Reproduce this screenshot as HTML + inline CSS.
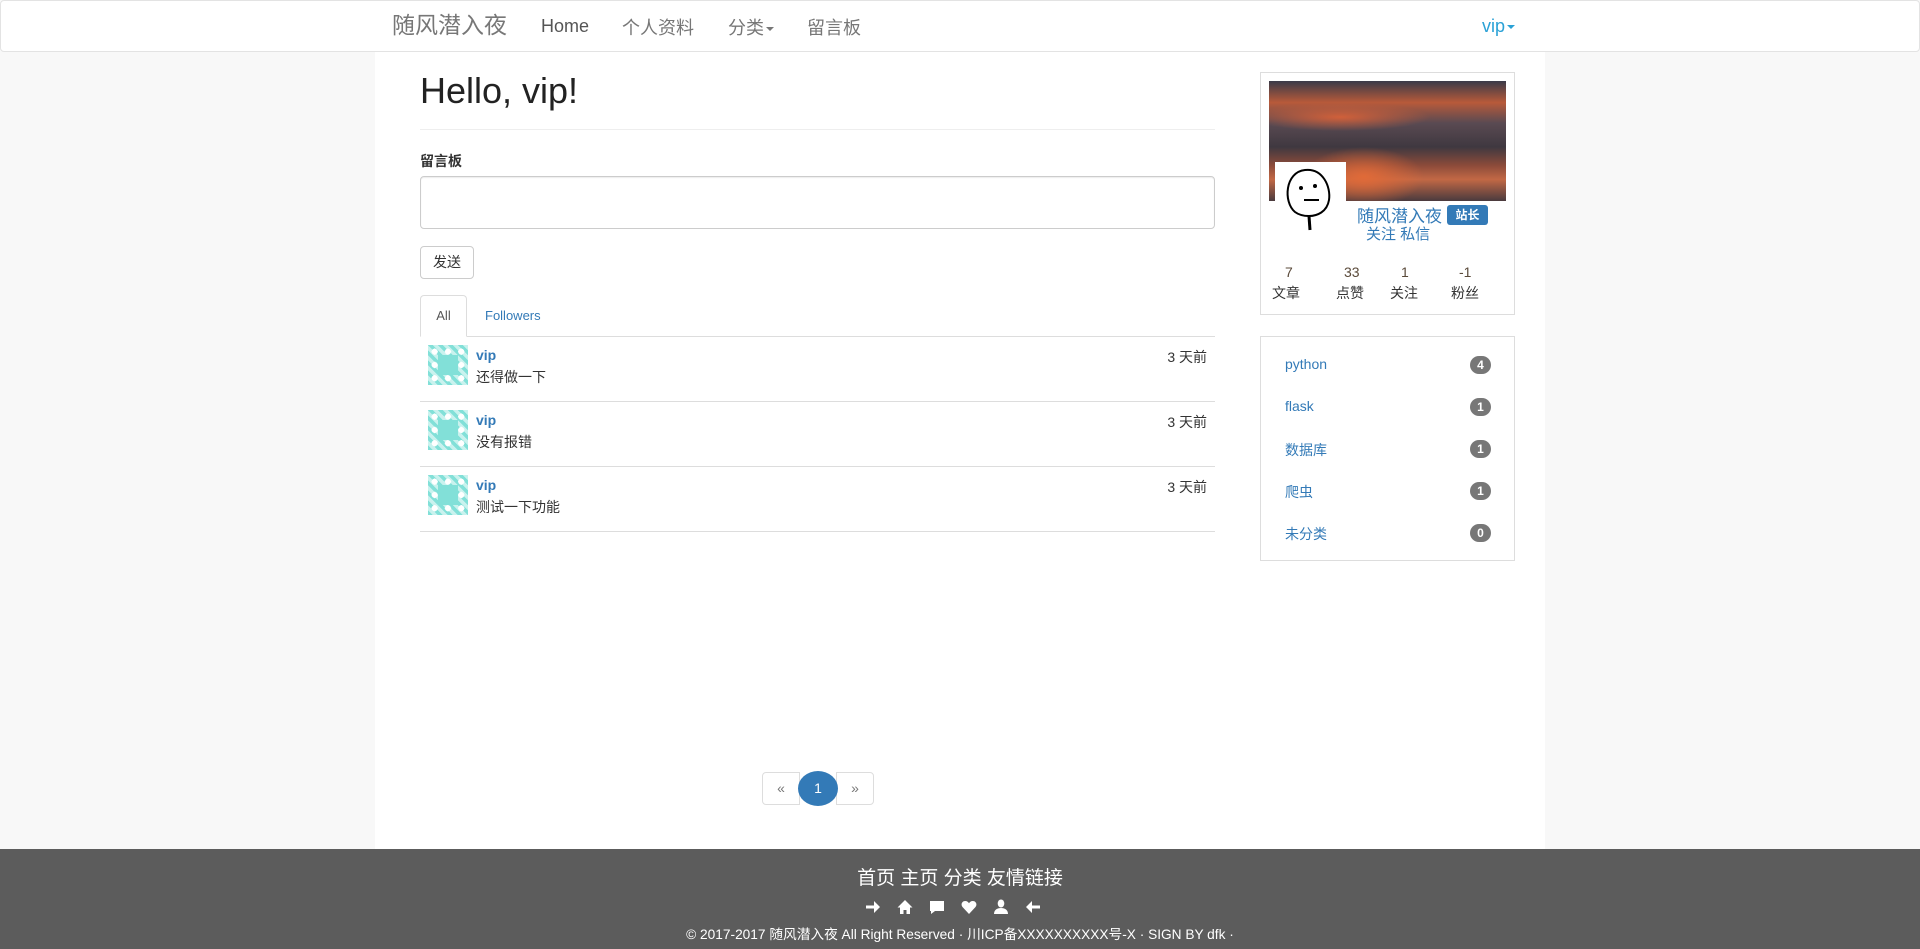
<!DOCTYPE html>
<html><head><meta charset="utf-8"><style>
*{box-sizing:border-box;margin:0;padding:0}
body{width:1920px;height:949px;overflow:hidden;background:#f8f8f8;font-family:"Liberation Sans","Noto Sans CJK SC",sans-serif;font-size:14px;color:#333;position:relative}
.a{position:absolute}
a{color:#337ab7;text-decoration:none}
.nav{left:0;top:0;width:1920px;height:52px;background:#fff;border:1px solid #e3e3e3;border-radius:4px}
.nav span{position:absolute;top:13px;font-size:18px;color:#777}
.main{left:375px;top:52px;width:1170px;height:797px;background:#fff}
.caret{display:inline-block;width:0;height:0;border-top:4px solid;border-left:4px solid transparent;border-right:4px solid transparent;vertical-align:middle;margin-left:2px}
.row{left:420px;width:795px;height:65px;border-bottom:1px solid #ddd}
.av{left:8px;top:8px;width:40px;height:40px;background:
radial-gradient(circle at 50% 50%,#fff 0 3px,transparent 3px) 0 0/13.3px 13.3px,
linear-gradient(45deg,#82e0d8 25%,#c9f2ee 25% 50%,#82e0d8 50% 75%,#c9f2ee 75%) 0 0/10px 10px}
.av:after{content:"";position:absolute;left:10px;top:10px;width:20px;height:20px;background:#82e0d8;box-shadow:inset 0 0 0 3px #82e0d8}
.nm{left:56px;top:10px;font-weight:bold;color:#337ab7}
.tx{left:56px;top:30px}
.tm{right:8px;top:10px}
.card{border:1px solid #ddd;background:#fff}
.cat{left:24px;color:#337ab7;font-size:14px}
.bd{right:23px;width:21px;height:18px;border-radius:9px;background:#777;color:#fff;font-size:12px;font-weight:bold;text-align:center;line-height:18px}
.ft{left:0;top:849px;width:1920px;height:100px;background:#5c5c5c;color:#fff;text-align:center}
.ic{position:absolute;top:50px}
</style></head><body>
<div class="a nav">
<span style="left:391px;top:10px;font-size:23px;color:#777;line-height:28px">随风潜入夜</span>
<span style="left:540px;top:15px;color:#555">Home</span>
<span style="left:621px">个人资料</span>
<span style="left:727px">分类<i class="caret"></i></span>
<span style="left:806px">留言板</span>
<span style="left:1481px;top:15px;color:#2aa1d6">vip<i class="caret"></i></span>
</div>
<div class="a main"></div>
<div class="a" style="left:420px;top:70px;font-size:36px;color:#222">Hello, vip!</div>
<div class="a" style="left:420px;top:129px;width:795px;border-top:1px solid #eee"></div>
<div class="a" style="left:420px;top:151px;font-weight:bold;font-size:14px">留言板</div>
<div class="a" style="left:420px;top:176px;width:795px;height:53px;border:1px solid #ccc;border-radius:4px;box-shadow:inset 0 1px 1px rgba(0,0,0,.075)"></div>
<div class="a" style="left:420px;top:246px;width:54px;height:33px;border:1px solid #ccc;border-radius:4px;text-align:center;line-height:31px;font-size:14px">发送</div>
<div class="a" style="left:420px;top:336px;width:795px;border-top:1px solid #ddd"></div>
<div class="a" style="left:420px;top:295px;width:47px;height:42px;border:1px solid #ddd;border-bottom:1px solid #fff;border-radius:4px 4px 0 0;background:#fff;text-align:center;line-height:40px;color:#555;font-size:13px">All</div>
<div class="a" style="left:485px;top:308px;color:#337ab7;font-size:13px">Followers</div>
<div class="a row" style="top:337px"><div class="a av"></div><div class="a nm">vip</div><div class="a tx">还得做一下</div><div class="a tm">3 天前</div></div>
<div class="a row" style="top:402px"><div class="a av"></div><div class="a nm">vip</div><div class="a tx">没有报错</div><div class="a tm">3 天前</div></div>
<div class="a row" style="top:467px"><div class="a av"></div><div class="a nm">vip</div><div class="a tx">测试一下功能</div><div class="a tm">3 天前</div></div>

<div class="a" style="left:762px;top:772px;width:38px;height:33px;border:1px solid #ddd;border-radius:4px 0 0 4px;text-align:center;line-height:31px;color:#777">«</div>
<div class="a" style="left:836px;top:772px;width:38px;height:33px;border:1px solid #ddd;border-radius:0 4px 4px 0;text-align:center;line-height:31px;color:#777">»</div>
<div class="a" style="left:798px;top:771px;width:40px;height:35px;border-radius:50%;background:#337ab7;color:#fff;text-align:center;line-height:35px">1</div>

<div class="a card" style="left:1260px;top:72px;width:255px;height:243px">
<div class="a" style="left:8px;top:8px;width:237px;height:120px;background:
radial-gradient(ellipse 60px 30px at 40% 80%,#e06a38 0,transparent 100%),
radial-gradient(ellipse 90px 14px at 30% 30%,#d0603a 0,transparent 100%),
linear-gradient(180deg,#3a3a48 0%,#b85a3a 18%,#5a4a52 35%,#3f3840 55%,#8a4a3a 70%,#c26845 82%,#4a3a3e 100%)"></div>
<div class="a" style="left:14px;top:89px;width:71px;height:70px;background:#fff"><svg width="71" height="70"><path d="M20 50 C8 40 10 10 30 8 C48 6 56 25 54 38 C52 50 42 54 34 54 C28 54 24 53 20 50" fill="none" stroke="#000" stroke-width="2"/><path d="M34 54 L35 68" stroke="#000" stroke-width="3"/><circle cx="26" cy="26" r="2"/><circle cx="40" cy="24" r="2"/><path d="M29 38 L44 38" stroke="#000" stroke-width="2"/></svg></div>
<div class="a" style="left:96px;top:129px;color:#337ab7;font-size:17px">随风潜入夜</div>
<div class="a" style="left:186px;top:132px;width:41px;height:20px;background:#337ab7;color:#fff;border-radius:3px;font-size:12px;font-weight:bold;text-align:center;line-height:20px">站长</div>
<div class="a" style="left:105px;top:150px;color:#337ab7;font-size:15px">关注 私信</div>
<div class="a" style="left:24px;top:191px;color:#5a4a3a">7</div>
<div class="a" style="left:11px;top:210px">文章</div>
<div class="a" style="left:83px;top:191px;color:#5a4a3a">33</div>
<div class="a" style="left:75px;top:210px">点赞</div>
<div class="a" style="left:140px;top:191px;color:#5a4a3a">1</div>
<div class="a" style="left:129px;top:210px">关注</div>
<div class="a" style="left:198px;top:191px;color:#5a4a3a">-1</div>
<div class="a" style="left:190px;top:210px">粉丝</div>
</div>

<div class="a card" style="left:1260px;top:336px;width:255px;height:225px">
<div class="a cat" style="top:19px">python</div><div class="a bd" style="top:19px">4</div>
<div class="a cat" style="top:61px">flask</div><div class="a bd" style="top:61px">1</div>
<div class="a cat" style="top:103px">数据库</div><div class="a bd" style="top:103px">1</div>
<div class="a cat" style="top:145px">爬虫</div><div class="a bd" style="top:145px">1</div>
<div class="a cat" style="top:187px">未分类</div><div class="a bd" style="top:187px">0</div>
</div>

<div class="a ft">
<div style="position:absolute;top:14px;width:100%;font-size:19px">首页 主页 分类 友情链接</div>
<svg class="ic" style="left:865px" width="16" height="16" viewBox="0 0 16 16"><path d="M1 6.5h8V2l6 6-6 6V9.5H1z" fill="#fff"/></svg>
<svg class="ic" style="left:897px" width="16" height="16" viewBox="0 0 16 16"><path d="M8 1L0.5 8.5H3V15h3.5v-4h3v4H13V8.5h2.5z" fill="#fff"/></svg>
<svg class="ic" style="left:929px" width="16" height="16" viewBox="0 0 16 16"><path d="M1 2h14v10H6l-4 3v-3H1z" fill="#fff"/></svg>
<svg class="ic" style="left:961px" width="16" height="16" viewBox="0 0 16 16"><path d="M8 15L1.5 8C-0.5 5.5 1 2 4.2 2c1.7 0 3 1 3.8 2.3C8.8 3 10.1 2 11.8 2 15 2 16.5 5.5 14.5 8z" fill="#fff"/></svg>
<svg class="ic" style="left:993px" width="16" height="16" viewBox="0 0 16 16"><ellipse cx="8" cy="4.5" rx="3.3" ry="4" fill="#fff"/><path d="M1 15c0-4 3-6 7-6s7 2 7 6z" fill="#fff"/></svg>
<svg class="ic" style="left:1025px" width="16" height="16" viewBox="0 0 16 16"><path d="M15 6.5H7V2L1 8l6 6V9.5h8z" fill="#fff"/></svg>
<div style="position:absolute;top:74px;width:100%;font-size:13.7px">© 2017-2017 随风潜入夜 All Right Reserved · 川ICP备XXXXXXXXXX号-X · SIGN BY dfk ·</div>
</div>
</body></html>
